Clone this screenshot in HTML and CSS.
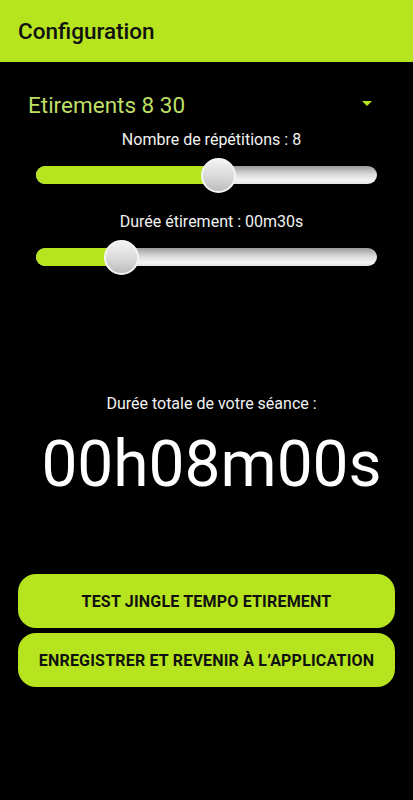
FILE: index.html
```html
<!DOCTYPE html>
<html lang="fr">
<head>
    <meta charset="UTF-8">
    <meta name="viewport" content="width=device-width, initial-scale=1.0">
    <title>Configuration</title>
    <link rel="stylesheet" href="styles.css">
</head>
<body>
    <header class="toolbar">
        <h1 class="toolbar-title">Configuration</h1>
    </header>

    <div class="spinner">
        <span class="spinner-text">Etirements 8 30</span>
        <span class="spinner-arrow"></span>
    </div>

    <p class="label">Nombre de répétitions : 8</p>
    <div class="slider">
        <div class="track">
            <div class="fill" style="width: 182px;"></div>
        </div>
        <div class="thumb" style="left: 182px;"></div>
    </div>

    <p class="label label-second">Durée étirement : 00m30s</p>
    <div class="slider">
        <div class="track">
            <div class="fill" style="width: 85px;"></div>
        </div>
        <div class="thumb" style="left: 85px;"></div>
    </div>

    <p class="label label-total">Durée totale de votre séance :</p>
    <p class="total">00h08m00s</p>

    <div class="buttons">
        <button class="btn">Test jingle tempo etirement</button>
        <button class="btn">Enregistrer et revenir à l’application</button>
    </div>
</body>
</html>
```

FILE: styles.css
```css
/* page */
body {
    margin: 0;
    background-color: #000;
    color: #fff;
    font-family: Roboto, "Noto Sans", Arial, sans-serif;
}

/* barre du haut */
.toolbar {
    height: 62px;
    background-color: #b6e41f;
    display: flex;
    align-items: center;
    padding-left: 18px;
}
.toolbar-title {
    margin: 0;
    font-size: 22.5px;
    font-weight: 500;
    color: #111;
}

/* liste déroulante */
.spinner {
    margin-top: 23px;
    height: 40px;
    display: flex;
    align-items: center;
    justify-content: space-between;
    padding: 0 41px 0 28px;
}
.spinner-text {
    font-size: 22.5px;
    color: #bddf66;
}
.spinner-arrow {
    width: 0;
    height: 0;
    border-left: 5px solid transparent;
    border-right: 5px solid transparent;
    border-top: 5px solid #b6e41f;
    margin-top: -4px;
}

/* textes */
.label {
    margin: 5px 0 0;
    padding-left: 10px;
    line-height: 20px;
    font-size: 16px;
    text-align: center;
    color: #f2f2f2;
}
.label-second {
    margin-top: 19px;
}
.label-total {
    margin-top: 119px;
}
.total {
    margin: 13px 0 0;
    padding-left: 10px;
    line-height: 76px;
    font-size: 64px;
    text-align: center;
    color: #fff;
}

/* curseurs */
.slider {
    position: relative;
    height: 36px;
    margin: 7px 36px 0;
    display: flex;
    align-items: center;
}
.track {
    width: 100%;
    height: 18px;
    border-radius: 9px;
    background: linear-gradient(to bottom, #9c9c9c 0%, #d9d9d9 45%, #f4f4f4 80%, #e2e2e2 100%);
    overflow: hidden;
}
.fill {
    height: 100%;
    background-color: #b6e41f;
}
.thumb {
    position: absolute;
    top: 1px;
    width: 31px;
    height: 31px;
    margin-left: -17px;
    border: 2px solid #f4f4f4;
    border-radius: 50%;
    background: linear-gradient(to bottom, #f2f2f2 0%, #d6d6d6 60%, #bdbdbd 100%);
}

/* boutons */
.buttons {
    margin: 71px 18px 0;
    display: flex;
    flex-direction: column;
    gap: 5px;
}
.btn {
    height: 54px;
    border: none;
    border-radius: 18px;
    background-color: #b6e41f;
    color: #111;
    font-family: Roboto, "Noto Sans", Arial, sans-serif;
    font-size: 16px;
    font-weight: 700;
    letter-spacing: 0.2px;
    text-transform: uppercase;
}
```
